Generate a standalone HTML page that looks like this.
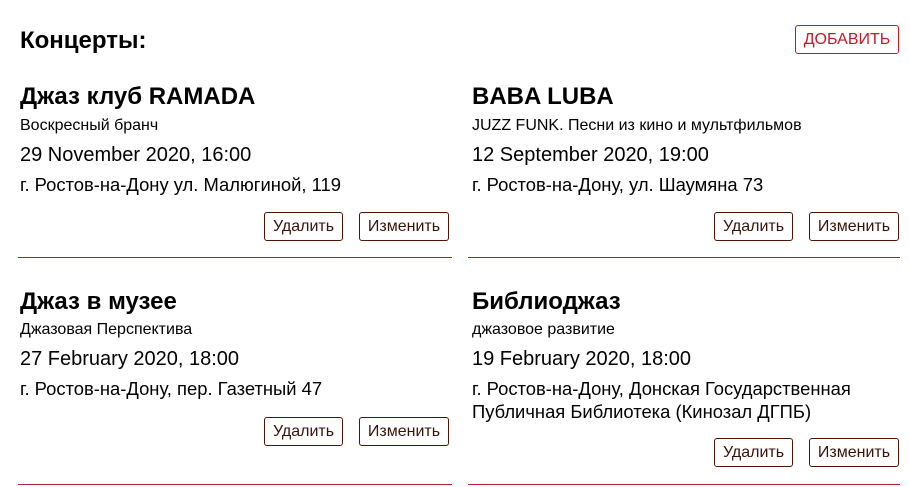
<!DOCTYPE html>
<html><head><meta charset="utf-8"><style>
*{margin:0;padding:0;box-sizing:border-box}
body{width:909px;height:487px;background:#fff;font-family:"Liberation Sans",Arial,sans-serif;color:#000;position:relative;overflow:hidden}
.a{position:absolute;white-space:nowrap}
h1{position:absolute;left:20px;top:27px;font-size:24px;font-weight:bold}
.add{position:absolute;left:795px;top:25px;width:104px;height:29px;border:1px solid #c41a2a;border-radius:3px;color:#c41a2a;font-size:16px;text-align:center;line-height:27px}
.t{font-size:24px;font-weight:bold}
.s{font-size:16px}
.d{font-size:20px}
.ad{font-size:18.4px;line-height:23px}
.b{position:absolute;height:29px;border:1px solid #4a1608;border-radius:3px;color:#3a1208;font-size:16px;text-align:center;line-height:27px}
.l{position:absolute;height:1px;background:#b0202e}
</style></head><body>
<h1>Концерты:</h1>
<div class="add">ДОБАВИТЬ</div>

<div class="a t" style="left:20px;top:83px">Джаз клуб RAMADA</div>
<div class="a s" style="left:20px;top:117px">Воскресный бранч</div>
<div class="a d" style="left:20px;top:144px">29 November 2020, 16:00</div>
<div class="a ad" style="left:20px;top:173px">г. Ростов-на-Дону ул. Малюгиной, 119</div>
<div class="b" style="left:264px;top:212px;width:79px">Удалить</div>
<div class="b" style="left:359px;top:212px;width:90px">Изменить</div>
<div class="l" style="left:18px;top:257px;width:434px"></div>

<div class="a t" style="left:472px;top:83px">BABA LUBA</div>
<div class="a s" style="left:472px;top:117px">JUZZ FUNK. Песни из кино и мультфильмов</div>
<div class="a d" style="left:472px;top:144px">12 September 2020, 19:00</div>
<div class="a ad" style="left:472px;top:173px">г. Ростов-на-Дону, ул. Шаумяна 73</div>
<div class="b" style="left:714px;top:212px;width:79px">Удалить</div>
<div class="b" style="left:809px;top:212px;width:90px">Изменить</div>
<div class="l" style="left:468px;top:257px;width:432px"></div>

<div class="a t" style="left:20px;top:288px">Джаз в музее</div>
<div class="a s" style="left:20px;top:321px">Джазовая Перспектива</div>
<div class="a d" style="left:20px;top:348px">27 February 2020, 18:00</div>
<div class="a ad" style="left:20px;top:377px">г. Ростов-на-Дону, пер. Газетный 47</div>
<div class="b" style="left:264px;top:417px;width:79px">Удалить</div>
<div class="b" style="left:359px;top:417px;width:90px">Изменить</div>
<div class="l" style="left:18px;top:484px;width:434px"></div>

<div class="a t" style="left:472px;top:288px">Библиоджаз</div>
<div class="a s" style="left:472px;top:321px">джазовое развитие</div>
<div class="a d" style="left:472px;top:348px">19 February 2020, 18:00</div>
<div class="a ad" style="left:472px;top:377px">г. Ростов-на-Дону, Донская Государственная<br>Публичная Библиотека (Кинозал ДГПБ)</div>
<div class="b" style="left:714px;top:438px;width:79px">Удалить</div>
<div class="b" style="left:809px;top:438px;width:90px">Изменить</div>
<div class="l" style="left:468px;top:484px;width:432px"></div>
</body></html>
